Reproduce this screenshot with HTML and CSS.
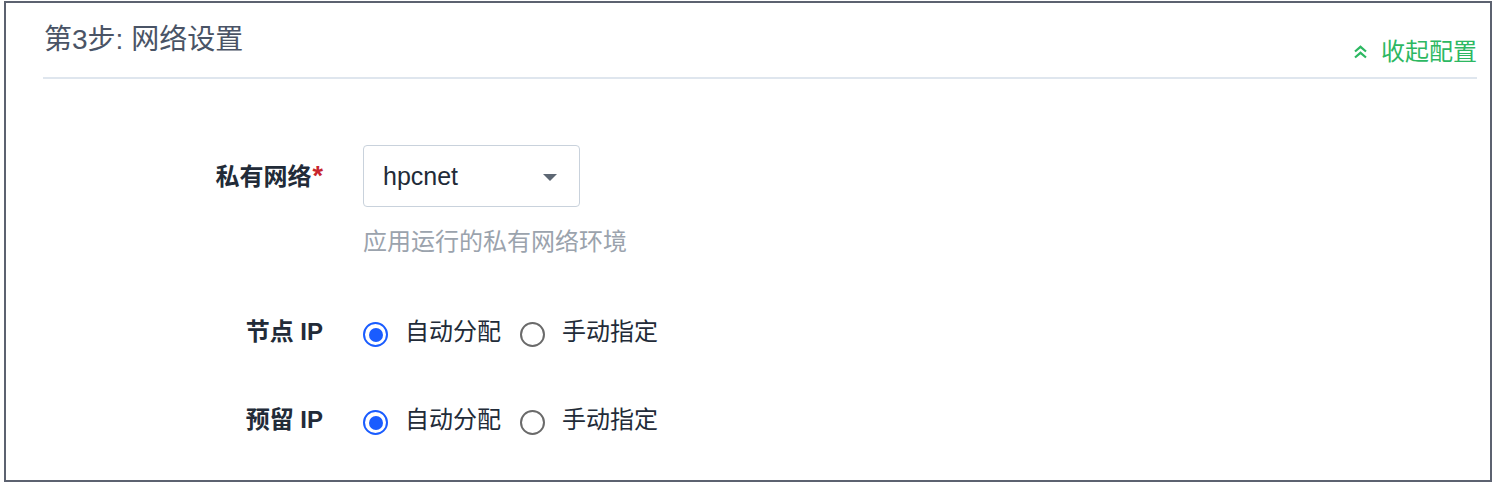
FILE: index.html
```html
<!DOCTYPE html>
<html lang="zh-CN">
<head>
<meta charset="utf-8">
<title>网络设置</title>
<link rel="stylesheet" href="styles.css">
</head>
<body>
<section class="panel">
  <header class="panel-head">
    <h2 class="panel-title">第3步: 网络设置</h2>
    <a class="collapse-link" href="#">
      <svg class="chev" width="15" height="14" viewBox="0 0 15 14" aria-hidden="true">
        <polyline points="2,6.5 7.5,1.8 13,6.5" fill="none" stroke="currentColor" stroke-width="2.2"/>
        <polyline points="2,12.5 7.5,7.8 13,12.5" fill="none" stroke="currentColor" stroke-width="2.2"/>
      </svg>
      <span>收起配置</span>
    </a>
  </header>
  <div class="form">
    <div class="row row-select">
      <label class="label label-select">私有网络<span class="req">*</span></label>
      <div class="control">
        <div class="select">
          <span class="select-value">hpcnet</span>
          <span class="caret"></span>
        </div>
        <div class="help">应用运行的私有网络环境</div>
      </div>
    </div>
    <div class="row row-radio">
      <label class="label">节点 IP</label>
      <div class="control radios">
        <span class="radio checked"><span class="dot"></span></span><span class="radio-text">自动分配</span>
        <span class="radio"></span><span class="radio-text">手动指定</span>
      </div>
    </div>
    <div class="row row-radio last">
      <label class="label">预留 IP</label>
      <div class="control radios">
        <span class="radio checked"><span class="dot"></span></span><span class="radio-text">自动分配</span>
        <span class="radio"></span><span class="radio-text">手动指定</span>
      </div>
    </div>
  </div>
</section>
</body>
</html>
```
FILE: styles.css
```css
html, body {
  margin: 0;
  padding: 0;
  background: #ffffff;
}
body {
  font-family: "Liberation Sans", "Noto Sans CJK SC", sans-serif;
}
.panel {
  margin: 1px 0 0 4px;
  width: 1484px;
  height: 477px;
  border: 2px solid #5c6270;
  background: #fff;
  box-sizing: content-box;
}
.panel-head {
  display: flex;
  justify-content: space-between;
  align-items: flex-start;
  margin: 0 13px 0 37px;
  padding-top: 19px;
  height: 55px;
  border-bottom: 2px solid #dfe6ee;
}
.panel-title {
  margin: 0;
  font-size: 28px;
  font-weight: normal;
  line-height: 36px;
  color: #4a5466;
  padding-left: 1px;
}
.collapse-link {
  display: flex;
  align-items: center;
  gap: 13px;
  margin-top: 14px;
  font-size: 24px;
  line-height: 32px;
  color: #2db862;
  text-decoration: none;
}
.chev {
  display: block;
  margin-top: -1px;
}
.form {
  padding-top: 66px;
}
.row {
  display: grid;
  grid-template-columns: 317px 1fr;
  column-gap: 40px;
  align-items: start;
}
.label {
  text-align: right;
  font-size: 24px;
  font-weight: bold;
  color: #222b38;
  line-height: 34px;
}
.label-select {
  line-height: 62px;
}
.req {
  color: #c8262e;
  font-size: 27px;
  margin-left: 1px;
}
.select {
  width: 217px;
  height: 62px;
  box-sizing: border-box;
  border: 1px solid #c9d2dc;
  border-radius: 4px;
  display: flex;
  align-items: center;
  justify-content: space-between;
  padding: 0 22px 0 19px;
}
.select-value {
  font-size: 25px;
  color: #222b38;
}
.caret {
  width: 0;
  height: 0;
  border-left: 7.5px solid transparent;
  border-right: 7.5px solid transparent;
  border-top: 7px solid #5d6773;
  margin-top: 2px;
}
.help {
  margin-top: 19px;
  font-size: 24px;
  line-height: 32px;
  color: #9ba3ad;
}
.row-radio {
  margin-top: 57px;
}
.row-radio.last {
  margin-top: 54px;
}
.radios {
  display: flex;
  align-items: center;
  height: 34px;
}
.radio {
  width: 25px;
  height: 25px;
  box-sizing: border-box;
  border: 2px solid #6a6a6a;
  border-radius: 50%;
  display: flex;
  align-items: center;
  justify-content: center;
  margin-top: 5px;
  flex: none;
}
.radio.checked {
  border: 2.5px solid #1a5cff;
}
.dot {
  width: 14px;
  height: 14px;
  border-radius: 50%;
  background: #1a5cff;
}
.radio-text {
  font-size: 24px;
  color: #222b38;
  margin-left: 17px;
  margin-right: 19px;
  line-height: 34px;
}
```
